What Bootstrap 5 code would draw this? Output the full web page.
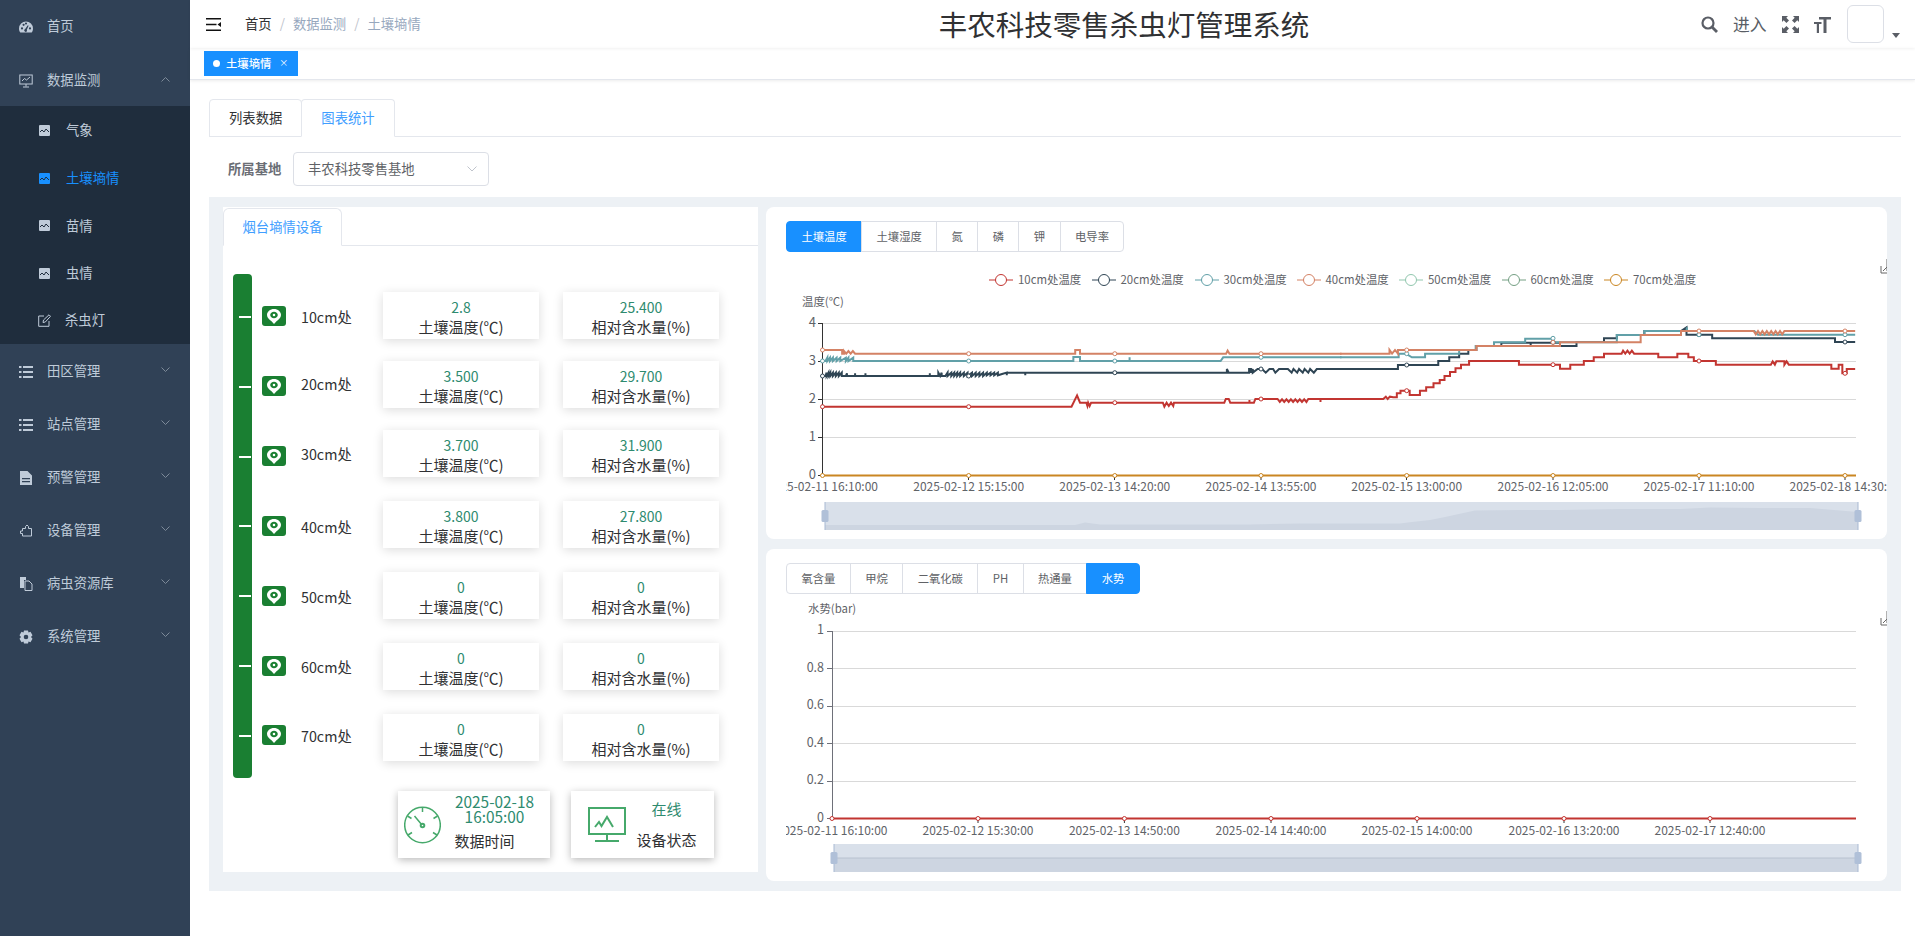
<!DOCTYPE html>
<html lang="zh-CN">
<head>
<meta charset="utf-8">
<title>丰农科技零售杀虫灯管理系统</title>
<link rel="stylesheet" href="https://cdn.jsdelivr.net/npm/bootstrap@5.3.0/dist/css/bootstrap.min.css">
<style>
html,body{height:100%;}
body{font-family:"Noto Sans CJK SC","Liberation Sans",sans-serif;font-size:13.33px;color:#303133;background:#fff;overflow:hidden;line-height:1.4;}
.app-shell{height:936px;width:1915px;}
.main-col{min-width:0;}
.side-bar{width:190px;flex:none;background:#304156;color:#bfcbd9;}
.menu-row{height:53px;padding:2px 20px 0 19px;color:#bfcbd9;text-decoration:none;}
.menu-row:first-child{padding-top:0;}
.menu-row:hover{color:#bfcbd9;}
.menu-row>svg:first-child{width:14px;height:14px;margin-right:14px;flex:none;}
.menu-chev{margin-left:auto;width:9px;height:6px;margin-top:-4px;flex:none;}
.sub-menu{background:#1f2d3d;height:238px;}
.sub-row{height:47.6px;padding:2px 0 0 39px;color:#bfcbd9;text-decoration:none;}
.sub-row:last-child{padding-top:0;}
.sub-row>svg{width:11px;height:11px;margin-right:16px;flex:none;}
.sub-row>svg.edit-ico{width:13px;height:13px;margin:0 14px 0 -1px;}
.sub-row.is-on{color:#1890ff;}
.top-head{height:48px;flex:none;padding:0 15px 0 16px;box-shadow:0 1px 3px rgba(0,0,0,.06);position:relative;}
.burger-ico{width:15px;height:13px;margin-right:24px;}
.crumbs{--bs-breadcrumb-margin-bottom:0;--bs-breadcrumb-item-padding-x:8px;--bs-breadcrumb-divider-color:#c0c4cc;color:#97a8be;line-height:18px;}
.crumbs .breadcrumb-item.first-crumb{color:#303133;}
.crumbs .breadcrumb-item.active{color:#97a8be;}
.app-title{margin:0 0 0 518px;font-size:28.5px;font-weight:400;line-height:40px;color:#303133;white-space:nowrap;}
.head-tools{gap:15px;color:#5a5e66;}
.head-tools svg{flex:none;}
.enter-txt{font-size:16.8px;line-height:24px;width:34px;white-space:nowrap;}
.avatar-box{width:37px;height:38px;border:1px solid #dcdfe6;border-radius:6px;margin-left:1px;}
.avatar-caret{width:0;height:0;border:4px solid transparent;border-top:5px solid #5a5e66;border-bottom:0;margin:22px 0 0 -7px;}
.tag-bar{height:32px;flex:none;padding:3px 0 0 14px;border-bottom:1px solid #e4e7ed;box-shadow:0 1px 3px rgba(0,0,0,.08);}
.view-tag{width:94px;height:25px;background:#1890ff;color:#fff;font-size:11.33px;font-weight:500;padding-left:9px;}
.tag-dot{width:7px;height:7px;border-radius:50%;background:#fff;margin-right:6px;}
.tag-x{margin-left:8px;font-weight:400;font-size:9px;}
.page-body{padding:19px 14px 0 19px;}
.page-tabs{--bs-nav-tabs-border-color:#e4e7ed;--bs-nav-tabs-border-radius:4px;border-bottom-color:#e4e7ed;}
.page-tabs .nav-link{height:38px;padding:0 19px;line-height:36px;color:#303133;border-color:#e4e7ed;font-size:13.33px;}
.page-tabs .nav-item+.nav-item{margin-left:-1px;}
.page-tabs .nav-link.active{color:#409eff;border-color:#e4e7ed #e4e7ed #fff;}
.filter-row{margin-top:15px;padding-left:19px;height:34px;}
.filter-label{width:65px;font-weight:700;color:#6b6e75;}
.base-select{width:196px;height:34px;padding:0 0 0 14px;font-size:13.33px;color:#606266;border-color:#dcdfe6;border-radius:4px;line-height:32px;
background-image:url("data:image/svg+xml,%3csvg xmlns='http://www.w3.org/2000/svg' viewBox='0 0 10 6'%3e%3cpath fill='none' stroke='%23c0c4cc' d='M.5.5 5 5 9.5.5'/%3e%3c/svg%3e");background-size:10px 6px;background-position:right 11px center;}
.grey-panel{margin-top:11px;height:694px;background:#edf1f5;padding:10px 14px;gap:8px;}
.soil-panel{width:535px;height:665px;background:#fff;flex:none;}
.soil-tabs{margin-top:1px;--bs-nav-tabs-border-color:#e4e7ed;border-bottom-color:#e4e7ed;}
.soil-tabs .nav-link,.soil-tabs .nav-link.active{margin-left:0;width:119px;height:38px;padding:0;text-align:center;line-height:36px;color:#409eff;font-size:13.33px;border-color:#e4e7ed #e4e7ed #fff;}
.depth-wrap{margin-top:28px;padding-left:10px;}
.depth-bar{width:19px;height:504px;background:#1a7f32;border-radius:4px;padding:42px 0 41px 6px;flex:none;}
.depth-tick{width:12px;height:2px;background:#fff;}
.depth-rows{padding-top:18px;margin-left:10px;}
.depth-row{height:47px;}
.depth-row+.depth-row{margin-top:22px;}
.depth-row:nth-child(n+4){margin-top:24px;}
.pin-badge{width:24px;height:20px;border-radius:3px;background:#1a7f32;flex:none;margin-right:15px;}
.depth-row:nth-child(1) .pin-badge,.depth-row:nth-child(5) .pin-badge{margin-top:1px;}
.depth-row:nth-child(2) .pin-badge,.depth-row:nth-child(4) .pin-badge{margin-top:3px;}
.depth-row:nth-child(3) .pin-badge{margin-top:5px;}
.depth-row:nth-child(6) .pin-badge{margin-bottom:1px;}
.depth-row:nth-child(7) .pin-badge{margin-bottom:5px;}
.depth-name{width:82px;font-size:14.3px;line-height:20px;color:#303133;white-space:nowrap;}
.depth-row:nth-child(1) .depth-name,.depth-row:nth-child(5) .depth-name{margin-top:3px;}
.depth-row:nth-child(2) .depth-name{margin-bottom:2px;}
.depth-row:nth-child(4) .depth-name{margin-top:5px;}
.depth-row:nth-child(6) .depth-name{margin-top:1px;}
.depth-row:nth-child(7) .depth-name{margin-bottom:3px;}
.read-card{width:156px;height:47px;padding-top:6px;text-align:center;box-shadow:0 2px 10px rgba(0,0,0,.14);margin-right:24px;}
.read-val{color:#2e8b6f;font-size:14px;line-height:19px;}
.read-lab{font-size:15px;line-height:19px;color:#303133;white-space:nowrap;}
.status-row{margin-top:13px;padding-left:175px;gap:21px;}
.status-card{height:67px;box-shadow:0 2px 8px rgba(0,0,0,.28);}
.status-time{width:152px;padding-left:6px;}
.status-online{width:143px;padding-left:17px;}
.status-text{text-align:center;flex:1;font-size:15px;}
.status-val{color:#2e8b6f;line-height:15px;}
.status-lab{color:#303133;line-height:20px;}
.time-text{padding:0 2px 2px 0;}
.time-text .status-val{font-size:15.4px;}
.time-text .status-lab{margin:5px 20px 0 0;line-height:24px;}
.online-text{margin-left:-2px;padding-right:5px;}
.online-text .status-val{line-height:22px;}
.online-text .status-lab{margin-top:8px;line-height:24px;}
.chart-col{gap:10px;flex:1;min-width:0;}
.chart-card{height:332px;background:#fff;border-radius:8px;padding:14px 0 0 20px;}
.chart-btns .btn{height:31px;padding:0 14.4px;line-height:29px;font-size:11.33px;color:#606266;background:#fff;border:1px solid #dcdfe6;border-radius:4px;}
.chart-btns .btn.is-on{background:#1890ff;border-color:#1890ff;color:#fff;}
.chart-btns{display:flex;width:max-content;}
.chart-plot{display:block;width:1101px;font-family:"Noto Sans CJK SC","Liberation Sans",sans-serif;font-size:12px;fill:#5f6368;}
.plot-1{height:278px;margin-top:6px;}
.plot-2{height:282px;margin-top:2px;}
.plot-lines{fill:none;stroke-width:2;}
.plot-lines *{vector-effect:non-scaling-stroke;}
.grid-line{stroke:#d9d9d9;stroke-width:1;}
.dots circle{fill:#fff;stroke-width:1;}
.legend-txt{font-size:11.4px;}
</style>
</head>
<body>
<div class="app-shell d-flex">
<aside class="side-bar">
  <a class="menu-row d-flex align-items-center" href="#"><svg viewBox="0 0 14 14" fill="currentColor"><path d="M7 1.5A7 7 0 0 0 0 8.5c0 1.6.5 2.9 1.3 4h11.4c.8-1.1 1.3-2.4 1.3-4a7 7 0 0 0-7-7Zm-4 8a1.1 1.1 0 1 1 0-2.2 1.1 1.1 0 0 1 0 2.2Zm1.6-3.6a1.1 1.1 0 1 1 0-2.2 1.1 1.1 0 0 1 0 2.2ZM7 4.6a1.1 1.1 0 1 1 0-2.2 1.1 1.1 0 0 1 0 2.2Zm1 6.5a1.5 1.5 0 1 1-1.8-2.2l2.6-3.6.8.5-1.8 4ZM11 9.500a1.100 1.100 0 1 1 0-2.200 1.100 1.100 0 0 1 0 2.200Z"/></svg>首页</a>
  <a class="menu-row d-flex align-items-center" href="#"><svg viewBox="0 0 14 14" fill="none" stroke="currentColor"><rect x=".8" y="1" width="12.4" height="9" /><path d="M3 7l2.500-2.500 2 1.500L11 3M7 10v2.500M4 13h6"/></svg><span>数据监测</span><svg class="menu-chev" viewBox="0 0 9 6" fill="none" stroke="#7d8a99"><path d="M.5 5.500 4.500 1.500l4 4"/></svg></a>
  <div class="sub-menu">
    <a class="sub-row d-flex align-items-center" href="#"><svg viewBox="0 0 11 11"><rect width="11" height="11" rx="1" fill="currentColor"/><path d="M1 7l2-2 2 2 2-3 3 3" fill="none" stroke="#1f2d3d"/></svg>气象</a>
    <a class="sub-row is-on d-flex align-items-center" href="#"><svg viewBox="0 0 11 11"><rect width="11" height="11" rx="1" fill="currentColor"/><path d="M1 7l2-2 2 2 2-3 3 3" fill="none" stroke="#1f2d3d"/></svg>土壤墒情</a>
    <a class="sub-row d-flex align-items-center" href="#"><svg viewBox="0 0 11 11"><rect width="11" height="11" rx="1" fill="currentColor"/><path d="M1 7l2-2 2 2 2-3 3 3" fill="none" stroke="#1f2d3d"/></svg>苗情</a>
    <a class="sub-row d-flex align-items-center" href="#"><svg viewBox="0 0 11 11"><rect width="11" height="11" rx="1" fill="currentColor"/><path d="M1 7l2-2 2 2 2-3 3 3" fill="none" stroke="#1f2d3d"/></svg>虫情</a>
    <a class="sub-row d-flex align-items-center" href="#"><svg class="edit-ico" viewBox="0 0 13 13" fill="none" stroke="currentColor"><path d="M11 7v5.300H.7V2H6M5 8.500l.5-2.500L11 .8l1.500 1.500L7.300 8Z"/></svg>杀虫灯</a>
  </div>
  <a class="menu-row d-flex align-items-center" href="#"><svg viewBox="0 0 14 14" fill="currentColor"><path d="M0 1h2.500v2H0zM4 1h10v2H4zM0 6h2.500v2H0zM4 6h10v2H4zM0 11h2.500v2H0zM4 11h10v2H4z"/></svg>田区管理<svg class="menu-chev" viewBox="0 0 9 6" fill="none" stroke="#7d8a99"><path d="M.5.500l4 4 4-4"/></svg></a>
  <a class="menu-row d-flex align-items-center" href="#"><svg viewBox="0 0 14 14" fill="currentColor"><path d="M0 1h2.500v2H0zM4 1h10v2H4zM0 6h2.500v2H0zM4 6h10v2H4zM0 11h2.500v2H0zM4 11h10v2H4z"/></svg>站点管理<svg class="menu-chev" viewBox="0 0 9 6" fill="none" stroke="#7d8a99"><path d="M.5.500l4 4 4-4"/></svg></a>
  <a class="menu-row d-flex align-items-center" href="#"><svg viewBox="0 0 14 14" fill="currentColor"><path fill-rule="evenodd" d="M1 0h7.500L13 4.500V14H1ZM3 7v1.200h8V7Zm0 3v1.200h8V10Z"/></svg>预警管理<svg class="menu-chev" viewBox="0 0 9 6" fill="none" stroke="#7d8a99"><path d="M.5.500l4 4 4-4"/></svg></a>
  <a class="menu-row d-flex align-items-center" href="#"><svg viewBox="0 0 14 14" fill="none" stroke="currentColor"><path d="M1.500 7h2V4.500h3V2.500l1.500-1.500 1.500 1.500v2h3v7.500H3.500V9.500h-2Z"/></svg>设备管理<svg class="menu-chev" viewBox="0 0 9 6" fill="none" stroke="#7d8a99"><path d="M.5.500l4 4 4-4"/></svg></a>
  <a class="menu-row d-flex align-items-center" href="#"><svg viewBox="0 0 14 14" fill="currentColor"><path d="M1 0h6v3H5v8H1Z"/><path fill="none" stroke="currentColor" d="M6 4h4l3 3v6.500H6Z"/></svg>病虫资源库<svg class="menu-chev" viewBox="0 0 9 6" fill="none" stroke="#7d8a99"><path d="M.5.500l4 4 4-4"/></svg></a>
  <a class="menu-row d-flex align-items-center" href="#"><svg viewBox="0 0 14 14" fill="currentColor"><path fill-rule="evenodd" d="M5 .500h4l.5 2 2-.7 2 3.500-1.500 1.700 1.500 1.700-2 3.500-2-.7-.5 2H5l-.5-2-2 .7-2-3.500L2 7 .5 5.300l2-3.500 2 .7ZM7 4.700a2.300 2.300 0 1 0 0 4.600 2.300 2.300 0 0 0 0-4.600Z"/></svg>系统管理<svg class="menu-chev" viewBox="0 0 9 6" fill="none" stroke="#7d8a99"><path d="M.5.500l4 4 4-4"/></svg></a>
</aside>
<main class="flex-grow-1 d-flex flex-column main-col">
  <header class="top-head d-flex align-items-center">
    <svg class="burger-ico" viewBox="0 0 15 13" fill="#111"><path d="M0 0h15v1.500H0zM0 5.700h10.500v1.500H0zM0 11.500h15V13H0zM15 4v5l-3.500-2.500Z"/></svg>
    <ol class="breadcrumb crumbs">
      <li class="breadcrumb-item first-crumb">首页</li>
      <li class="breadcrumb-item">数据监测</li>
      <li class="breadcrumb-item active">土壤墒情</li>
    </ol>
    <h1 class="app-title">丰农科技零售杀虫灯管理系统</h1>
    <div class="head-tools ms-auto d-flex align-items-center">
      <svg width="17" height="17" viewBox="0 0 17 17" fill="none" stroke="currentColor" stroke-width="2.200"><circle cx="7" cy="7" r="5.500"/><path d="m11 11 5 5" stroke-width="2.800"/></svg>
      <span class="enter-txt">进入</span>
      <svg width="17" height="17" viewBox="0 0 17 17" fill="currentColor"><path d="M0 0h6L4.300 1.700 7 4.400 4.400 7 1.700 4.300 0 6ZM17 0v6l-1.700-1.700L12.600 7 10 4.400l2.700-2.700L11 0ZM0 17v-6l1.700 1.700L4.400 10 7 12.600l-2.700 2.700L6 17ZM17 17h-6l1.700-1.700L10 12.600l2.600-2.600 2.700 2.700L17 11Z"/></svg>
      <svg width="17" height="18" viewBox="0 0 17 18" fill="currentColor"><path d="M5 2h12v2.500h-4.500V18H9.500V4.500H5ZM0 7h7.500v2H5v9H2.800V9H0Z"/></svg>
      <div class="avatar-box"></div>
      <div class="avatar-caret"></div>
    </div>
  </header>
  <div class="tag-bar">
    <div class="view-tag d-flex align-items-center"><span class="tag-dot"></span>土壤墒情<span class="tag-x">×</span></div>
  </div>
  <div class="page-body">
    <ul class="nav nav-tabs page-tabs">
      <li class="nav-item"><a class="nav-link" href="#">列表数据</a></li>
      <li class="nav-item"><a class="nav-link active" href="#">图表统计</a></li>
    </ul>
    <div class="filter-row d-flex align-items-center">
      <span class="filter-label">所属基地</span>
      <select class="form-select base-select"><option>丰农科技零售基地</option></select>
    </div>
    <div class="grey-panel d-flex align-items-start">
      <section class="soil-panel">
        <ul class="nav nav-tabs soil-tabs"><li class="nav-item"><a class="nav-link active" href="#">烟台墒情设备</a></li></ul>
        <div class="depth-wrap d-flex">
          <div class="depth-bar d-flex flex-column justify-content-between">
            <div class="depth-tick"></div><div class="depth-tick"></div><div class="depth-tick"></div><div class="depth-tick"></div><div class="depth-tick"></div><div class="depth-tick"></div><div class="depth-tick"></div>
          </div>
          <div class="depth-rows">
            <div class="depth-row d-flex align-items-center"><span class="pin-badge d-flex align-items-center justify-content-center"><svg width="14" height="15" viewBox="0 0 14 15"><path fill="#fff" fill-rule="evenodd" d="M7 0c3.900 0 7 2.700 7 6 0 3-2.400 4.500-4.500 6.200L7 15l-2.500-2.800C2.400 10.500 0 9 0 6c0-3.300 3.100-6 7-6Zm0 2.700c-2 0-3.800 1.400-3.800 3.300S5 9.300 7 9.300s3.800-1.400 3.800-3.300S9 2.700 7 2.700Zm0 2a1.300 1.300 0 1 1 0 2.600 1.300 1.300 0 0 1 0-2.600Z"/></svg></span><span class="depth-name">10cm处</span><div class="read-card"><div class="read-val">2.8</div><div class="read-lab">土壤温度(℃)</div></div><div class="read-card"><div class="read-val">25.400</div><div class="read-lab">相对含水量(%)</div></div></div>
            <div class="depth-row d-flex align-items-center"><span class="pin-badge d-flex align-items-center justify-content-center"><svg width="14" height="15" viewBox="0 0 14 15"><path fill="#fff" fill-rule="evenodd" d="M7 0c3.900 0 7 2.700 7 6 0 3-2.400 4.500-4.500 6.200L7 15l-2.500-2.800C2.400 10.500 0 9 0 6c0-3.300 3.100-6 7-6Zm0 2.700c-2 0-3.800 1.400-3.800 3.300S5 9.300 7 9.300s3.800-1.400 3.800-3.300S9 2.700 7 2.700Zm0 2a1.300 1.300 0 1 1 0 2.600 1.300 1.300 0 0 1 0-2.600Z"/></svg></span><span class="depth-name">20cm处</span><div class="read-card"><div class="read-val">3.500</div><div class="read-lab">土壤温度(℃)</div></div><div class="read-card"><div class="read-val">29.700</div><div class="read-lab">相对含水量(%)</div></div></div>
            <div class="depth-row d-flex align-items-center"><span class="pin-badge d-flex align-items-center justify-content-center"><svg width="14" height="15" viewBox="0 0 14 15"><path fill="#fff" fill-rule="evenodd" d="M7 0c3.900 0 7 2.700 7 6 0 3-2.400 4.500-4.500 6.200L7 15l-2.500-2.800C2.400 10.500 0 9 0 6c0-3.300 3.100-6 7-6Zm0 2.700c-2 0-3.800 1.400-3.800 3.300S5 9.300 7 9.300s3.800-1.400 3.800-3.300S9 2.700 7 2.700Zm0 2a1.300 1.300 0 1 1 0 2.600 1.300 1.300 0 0 1 0-2.600Z"/></svg></span><span class="depth-name">30cm处</span><div class="read-card"><div class="read-val">3.700</div><div class="read-lab">土壤温度(℃)</div></div><div class="read-card"><div class="read-val">31.900</div><div class="read-lab">相对含水量(%)</div></div></div>
            <div class="depth-row d-flex align-items-center"><span class="pin-badge d-flex align-items-center justify-content-center"><svg width="14" height="15" viewBox="0 0 14 15"><path fill="#fff" fill-rule="evenodd" d="M7 0c3.900 0 7 2.700 7 6 0 3-2.400 4.500-4.500 6.200L7 15l-2.500-2.800C2.400 10.500 0 9 0 6c0-3.300 3.100-6 7-6Zm0 2.700c-2 0-3.800 1.400-3.800 3.300S5 9.300 7 9.300s3.800-1.400 3.800-3.300S9 2.700 7 2.700Zm0 2a1.300 1.300 0 1 1 0 2.600 1.300 1.300 0 0 1 0-2.600Z"/></svg></span><span class="depth-name">40cm处</span><div class="read-card"><div class="read-val">3.800</div><div class="read-lab">土壤温度(℃)</div></div><div class="read-card"><div class="read-val">27.800</div><div class="read-lab">相对含水量(%)</div></div></div>
            <div class="depth-row d-flex align-items-center"><span class="pin-badge d-flex align-items-center justify-content-center"><svg width="14" height="15" viewBox="0 0 14 15"><path fill="#fff" fill-rule="evenodd" d="M7 0c3.900 0 7 2.700 7 6 0 3-2.400 4.500-4.500 6.200L7 15l-2.500-2.800C2.400 10.500 0 9 0 6c0-3.300 3.100-6 7-6Zm0 2.700c-2 0-3.800 1.400-3.800 3.300S5 9.300 7 9.300s3.800-1.400 3.800-3.300S9 2.700 7 2.700Zm0 2a1.300 1.300 0 1 1 0 2.600 1.300 1.300 0 0 1 0-2.600Z"/></svg></span><span class="depth-name">50cm处</span><div class="read-card"><div class="read-val">0</div><div class="read-lab">土壤温度(℃)</div></div><div class="read-card"><div class="read-val">0</div><div class="read-lab">相对含水量(%)</div></div></div>
            <div class="depth-row d-flex align-items-center"><span class="pin-badge d-flex align-items-center justify-content-center"><svg width="14" height="15" viewBox="0 0 14 15"><path fill="#fff" fill-rule="evenodd" d="M7 0c3.900 0 7 2.700 7 6 0 3-2.400 4.500-4.500 6.200L7 15l-2.500-2.800C2.400 10.500 0 9 0 6c0-3.300 3.100-6 7-6Zm0 2.700c-2 0-3.800 1.400-3.800 3.300S5 9.300 7 9.300s3.800-1.400 3.800-3.300S9 2.700 7 2.700Zm0 2a1.300 1.300 0 1 1 0 2.600 1.300 1.300 0 0 1 0-2.600Z"/></svg></span><span class="depth-name">60cm处</span><div class="read-card"><div class="read-val">0</div><div class="read-lab">土壤温度(℃)</div></div><div class="read-card"><div class="read-val">0</div><div class="read-lab">相对含水量(%)</div></div></div>
            <div class="depth-row d-flex align-items-center"><span class="pin-badge d-flex align-items-center justify-content-center"><svg width="14" height="15" viewBox="0 0 14 15"><path fill="#fff" fill-rule="evenodd" d="M7 0c3.900 0 7 2.700 7 6 0 3-2.400 4.500-4.500 6.200L7 15l-2.500-2.800C2.400 10.500 0 9 0 6c0-3.300 3.100-6 7-6Zm0 2.700c-2 0-3.800 1.400-3.800 3.300S5 9.300 7 9.300s3.800-1.400 3.800-3.300S9 2.700 7 2.700Zm0 2a1.300 1.300 0 1 1 0 2.600 1.300 1.300 0 0 1 0-2.600Z"/></svg></span><span class="depth-name">70cm处</span><div class="read-card"><div class="read-val">0</div><div class="read-lab">土壤温度(℃)</div></div><div class="read-card"><div class="read-val">0</div><div class="read-lab">相对含水量(%)</div></div></div>
          </div>
        </div>
        <div class="status-row d-flex">
          <div class="status-card status-time d-flex align-items-center">
            <svg width="37" height="40" viewBox="0 0 37 40" fill="none" stroke="#46a96b" stroke-width="1.500"><circle cx="18.500" cy="20" r="17.800"/><path d="M18.500 2v5M3.500 11l4 2.500M33.500 11l-4 2.500M4 30l4-2.500M33 30l-4-2.500M10.500 11 18 20"/><circle cx="18.500" cy="20.500" r="1.800" stroke-width="2"/></svg>
            <div class="status-text time-text"><div class="status-val">2025-02-18<br>16:05:00</div><div class="status-lab">数据时间</div></div>
          </div>
          <div class="status-card status-online d-flex align-items-center">
            <svg width="38" height="36" viewBox="0 0 38 36" fill="none" stroke="#46a96b" stroke-width="2"><rect x="1" y="1" width="36" height="26"/><path d="M19 27v6M7 34h24M7 20l4-5 2.500 4 5.500-9 6 10" stroke-linejoin="miter"/></svg>
            <div class="status-text online-text"><div class="status-val">在线</div><div class="status-lab">设备状态</div></div>
          </div>
        </div>
      </section>
      <section class="chart-col d-flex flex-column">
        <div class="chart-card">
          <div class="btn-group chart-btns"><button class="btn is-on">土壤温度</button><button class="btn">土壤湿度</button><button class="btn">氮</button><button class="btn">磷</button><button class="btn">钾</button><button class="btn">电导率</button></div>
          <svg class="chart-plot plot-1" viewBox="786 258 1101 278">
            <path d="M1881 266v7h6M1883 271l4-4M1887 259v12" fill="none" stroke="#666" stroke-width="1"/>
            <g>
              <g fill="none" stroke-width="1"><path stroke="#c23531" d="M989 280h24"/><path stroke="#2f4554" d="M1092 280h24"/><path stroke="#61a0a8" d="M1195 280h24"/><path stroke="#d48265" d="M1297 280h24"/><path stroke="#91c7ae" d="M1399 280h24"/><path stroke="#749f83" d="M1502 280h24"/><path stroke="#ca8622" d="M1604 280h24"/></g>
              <g fill="#fff" stroke-width="1"><circle cx="1001" cy="280" r="5.500" stroke="#c23531"/><circle cx="1104" cy="280" r="5.500" stroke="#2f4554"/><circle cx="1207" cy="280" r="5.500" stroke="#61a0a8"/><circle cx="1309" cy="280" r="5.500" stroke="#d48265"/><circle cx="1411" cy="280" r="5.500" stroke="#91c7ae"/><circle cx="1514" cy="280" r="5.500" stroke="#749f83"/><circle cx="1616" cy="280" r="5.500" stroke="#ca8622"/></g>
              <g class="legend-txt" dominant-baseline="central"><text x="1018" y="279">10cm处温度</text><text x="1120.500" y="279">20cm处温度</text><text x="1223.500" y="279">30cm处温度</text><text x="1325.500" y="279">40cm处温度</text><text x="1428" y="279">50cm处温度</text><text x="1530.500" y="279">60cm处温度</text><text x="1633" y="279">70cm处温度</text></g>
            </g>
            <text class="legend-txt" x="802" y="306">温度(℃)</text>
            <g class="grid-line"><path d="M822.500 323.500H1856M822.500 361.500H1856M822.500 399.500H1856M822.500 437.500H1856"/></g>
            <path d="M822.500 323v152M818 323.500h5M818 361.500h5M818 399.500h5M818 437.500h5M818 475.500h5" stroke="#333" fill="none"/>
            <g text-anchor="end" font-size="13"><text x="816" y="327">4</text><text x="816" y="365">3</text><text x="816" y="403">2</text><text x="816" y="441">1</text><text x="816" y="479">0</text></g>
            <g class="plot-lines" transform="translate(770 200) scale(.36995 .33333)">
              <path stroke="#2f4554" d="M142 528H150L153 518V528L158 518V528L163 518V528L170 518V528L178 518V528L186 518V528L194 518V528H205L208 520V528H230V520V528H258V520V528H432V520V528H455V518L460 528L464 518V528L474 528L480 518V528L490 518V528L498 518V528L506 518V528L514 518V528L524 518V528L534 518V528L546 518V528L556 518V528L566 518V528L576 518V528L586 518V526L596 518V526L606 518V526L616 518V526L640 518V526V518H690V526V518H1235V507L1240 518H1295V507H1300V518L1305 507V518L1318 507H1330L1340 518L1350 507H1360L1366 518L1376 507H1400L1410 518L1415 507L1425 518L1430 507L1440 518L1445 507L1455 518L1460 507L1470 518L1478 507H1545"/>
              <path stroke="#61a0a8" d="M142 483H150L155 473V483L162 473V483L170 473V483L180 473V483L190 473V483L205 473V483L212 473V483L225 473V483H820V471H838V483H972V472V483H1218L1225 472H1545"/>
              <path stroke="#c23531" d="M142 620H815L830 586L838 608H855L858 618L860 608L864 618L868 608H1062L1066 620L1072 608L1078 618L1084 608L1090 618L1092 608H1228L1232 597H1240L1244 608H1296V600V608H1308L1312 597H1372L1378 606L1384 598L1390 606L1396 598L1402 606L1408 598L1414 606L1420 598L1426 606L1432 598L1438 606L1444 598L1450 606L1455 597H1488V606V597H1545"/>
              <path stroke="#d48265" d="M142 450H195V461H200V453L206 461L212 453L218 461L224 453L230 461H825V450H838V461H1233L1237 452L1242 461H1545"/>
            </g>
            <g class="plot-lines" transform="translate(1340 200) scale(.36667 .33333)">
              <path stroke="#2f4554" d="M0 507H158V495H268V483H298V472H325V461H350V450H372V438H440V428H520V438V428H600V438H645V426H720V415H755V405H830V393H930L945 382V404H1015V415H1350V426H1405"/>
              <path stroke="#61a0a8" d="M0 472H160V461H180L196 472H232V461H325V450H370V438H420V427H505V416H580V427H755V405H830V393H945L946 382V393H1130L1140 404H1200V404H1405"/>
              <path stroke="#c23531" d="M0 597H118L125 590L130 597L136 590L145 592H155V580H165V572H190V585H218V572H235V562H255V550H272V540H285V528H300V516H315V505H330V494H352V483H488V494H600V506H628V494H665V483H692V472H720V461H768L772 452L778 461L784 452L790 461L796 452L802 461H868V472H920V461H950V472H965V483H1025V494H1175L1180 484L1186 494L1190 484H1212V494L1218 484L1224 494H1340V506H1360V494H1370V520H1382V507H1405"/>
              <path stroke="#d48265" d="M0 461H135V450L142 461L150 450L158 461V450H325V450H372V438H600V427H820V405H930V393H1128L1134 403L1140 393L1146 403L1152 393L1158 403L1164 393L1170 403L1176 393L1182 403L1188 393L1194 403L1200 393L1206 403L1212 393H1405"/>
            </g>
            <path d="M822.500 475.500H1856" stroke="#ca8622" stroke-width="2" fill="none"/>
            <path d="M968.500 475v5M1114.500 475v5M1261 475v5M1406.500 475v5M1553 475v5M1699 475v5M1845 475v5" stroke="#333" fill="none"/>
            <g class="dots" stroke="#c23531"><circle cx="822.500" cy="406.700" r="2"/><circle cx="968.700" cy="406.700" r="2"/><circle cx="1114.800" cy="402.700" r="2"/><circle cx="1261" cy="399" r="2"/><circle cx="1406.700" cy="390.700" r="2"/><circle cx="1553" cy="364.700" r="2"/><circle cx="1699" cy="361" r="2"/><circle cx="1845" cy="373.300" r="2"/></g>
            <g class="dots" stroke="#2f4554"><circle cx="822.500" cy="376" r="2"/><circle cx="968.700" cy="376" r="2"/><circle cx="1114.800" cy="372.700" r="2"/><circle cx="1261" cy="369" r="2"/><circle cx="1406.700" cy="365" r="2"/><circle cx="1553" cy="342.300" r="2"/><circle cx="1699" cy="334.700" r="2"/><circle cx="1845" cy="342" r="2"/></g>
            <g class="dots" stroke="#61a0a8"><circle cx="822.500" cy="361" r="2"/><circle cx="968.700" cy="361" r="2"/><circle cx="1114.800" cy="361" r="2"/><circle cx="1261" cy="357.300" r="2"/><circle cx="1406.700" cy="353.700" r="2"/><circle cx="1553" cy="338.300" r="2"/><circle cx="1699" cy="334.700" r="2"/><circle cx="1845" cy="334.700" r="2"/></g>
            <g class="dots" stroke="#d48265"><circle cx="822.500" cy="350" r="2"/><circle cx="968.700" cy="353.700" r="2"/><circle cx="1114.800" cy="353.700" r="2"/><circle cx="1261" cy="353.700" r="2"/><circle cx="1406.700" cy="350" r="2"/><circle cx="1553" cy="342.300" r="2"/><circle cx="1699" cy="331" r="2"/><circle cx="1845" cy="331" r="2"/></g>
            <g class="dots" stroke="#ca8622"><circle cx="822.500" cy="475.500" r="2"/><circle cx="968.700" cy="475.500" r="2"/><circle cx="1114.800" cy="475.500" r="2"/><circle cx="1261" cy="475.500" r="2"/><circle cx="1406.700" cy="475.500" r="2"/><circle cx="1553" cy="475.500" r="2"/><circle cx="1699" cy="475.500" r="2"/><circle cx="1845" cy="475.500" r="2"/></g>
            <g text-anchor="middle"><text x="822.500" y="491">2025-02-11 16:10:00</text><text x="968.700" y="491">2025-02-12 15:15:00</text><text x="1114.800" y="491">2025-02-13 14:20:00</text><text x="1261" y="491">2025-02-14 13:55:00</text><text x="1406.700" y="491">2025-02-15 13:00:00</text><text x="1553" y="491">2025-02-16 12:05:00</text><text x="1699" y="491">2025-02-17 11:10:00</text><text x="1845" y="491">2025-02-18 14:30:00</text></g>
            <rect x="825" y="502" width="1033" height="28" fill="#d9e0ea"/>
            <path d="M825 530V525H1075L1085 522.500L1100 524.500H1250L1300 523.500H1400L1412 522L1430 520L1445 517L1475 510.500L1520 510H1560L1620 509H1680L1710 507.500L1760 508H1810L1840 510.500L1858 512V530Z" fill="#cdd5e1"/>
            <path d="M825 502v28M1858 502v28" stroke="#a8b9d3" fill="none"/>
            <rect x="821.500" y="510" width="7" height="12" rx="1.500" fill="#b0c0d8"/><rect x="1854.500" y="510" width="7" height="12" rx="1.500" fill="#b0c0d8"/>
          </svg>
        </div>
        <div class="chart-card">
          <div class="btn-group chart-btns"><button class="btn">氧含量</button><button class="btn">甲烷</button><button class="btn">二氧化碳</button><button class="btn">PH</button><button class="btn">热通量</button><button class="btn is-on">水势</button></div>
          <svg class="chart-plot plot-2" viewBox="786 596 1101 282">
            <path d="M1881 618v7h6M1883 623l4-4M1887 611v12" fill="none" stroke="#666" stroke-width="1"/>
            <text class="legend-txt" x="808" y="613">水势(bar)</text>
            <g class="grid-line"><path d="M832 631.500H1856M832 668.500H1856M832 706.500H1856M832 743.500H1856M832 781.500H1856"/></g>
            <path d="M832.500 631v187M827 631.500h5M827 668.500h5M827 706.500h5M827 743.500h5M827 781.500h5M827 818.500h5" stroke="#6e7079" fill="none"/>
            <g text-anchor="end" font-size="12.500"><text x="824" y="634">1</text><text x="824" y="672">0.8</text><text x="824" y="709">0.6</text><text x="824" y="747">0.4</text><text x="824" y="784">0.2</text><text x="824" y="822">0</text></g>
            <path d="M978 818v5M1124.400 818v5M1271 818v5M1417 818v5M1564 818v5M1710 818v5" stroke="#333" fill="none"/>
            <path d="M832 818.500H1856" stroke="#c23531" stroke-width="2" fill="none"/>
            <g class="dots" stroke="#c23531"><circle cx="832" cy="818.500" r="2"/><circle cx="978" cy="818.500" r="2"/><circle cx="1124.400" cy="818.500" r="2"/><circle cx="1271" cy="818.500" r="2"/><circle cx="1417" cy="818.500" r="2"/><circle cx="1564" cy="818.500" r="2"/><circle cx="1710" cy="818.500" r="2"/></g>
            <g text-anchor="middle"><text x="832" y="835">2025-02-11 16:10:00</text><text x="978" y="835">2025-02-12 15:30:00</text><text x="1124.400" y="835">2025-02-13 14:50:00</text><text x="1271" y="835">2025-02-14 14:40:00</text><text x="1417" y="835">2025-02-15 14:00:00</text><text x="1564" y="835">2025-02-16 13:20:00</text><text x="1710" y="835">2025-02-17 12:40:00</text></g>
            <rect x="834" y="844" width="1024" height="14" fill="#d9e0ea"/>
            <rect x="834" y="858" width="1024" height="14" fill="#cdd5e1"/>
            <path d="M834 858H1858" stroke="#b8c2d0" stroke-width="1" fill="none"/>
            <path d="M834 844v28M1858 844v28" stroke="#a8b9d3" fill="none"/>
            <rect x="830.500" y="852" width="7" height="12" rx="1.500" fill="#b0c0d8"/><rect x="1854.500" y="852" width="7" height="12" rx="1.500" fill="#b0c0d8"/>
          </svg>
        </div>
      </section>
    </div>
  </div>
</main>
</div>
<script src="https://cdn.jsdelivr.net/npm/bootstrap@5.3.0/dist/js/bootstrap.bundle.min.js"></script>
</body>
</html>
